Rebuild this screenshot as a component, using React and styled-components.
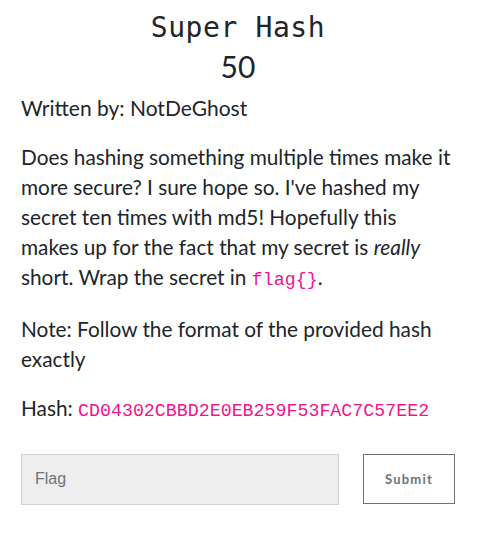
import styled, { createGlobalStyle } from "styled-components";

const GlobalStyle = createGlobalStyle`
    body {
        margin: 0;
        background: #fff;
        color: #212529;
        font-family: Lato, "Open Sans", sans-serif;
    }
`

function App() {
    return (
        <Wrapper>
            <GlobalStyle />
            <Title>Super Hash</Title>
            <Points>50</Points>
            <Author>Written by: NotDeGhost</Author>
            <Description>
                <p>
                    Does hashing something multiple times make it more secure? I sure hope so.
                    I've hashed my secret ten times with md5! Hopefully this makes up for the
                    fact that my secret is <em>really</em> short. Wrap the secret in <Code>flag{'{}'}</Code>.
                </p>
                <p>Note: Follow the format of the provided hash exactly</p>
                <p>Hash: <Code>CD04302CBBD2E0EB259F53FAC7C57EE2</Code></p>
            </Description>
            <SubmitRow>
                <FlagInput type="text" placeholder="Flag" />
                <SubmitButton>Submit</SubmitButton>
            </SubmitRow>
        </Wrapper>
    )
}

export default App

const Wrapper = styled.div`
    width: 434px;
    padding: 11px 27px 20px 21px;
`

const Title = styled.h3`
    margin: 0;
    text-align: center;
    font-family: "DejaVu Sans Mono", monospace;
    font-weight: 400;
    font-size: 28px;
    letter-spacing: 0.6px;
    line-height: 1.2;
    color: #212529;
`

const Points = styled.h4`
    margin: 3px 0 0;
    text-align: center;
    font-weight: 400;
    font-size: 30px;
    line-height: 1.2;
`

const Author = styled.div`
    margin-top: 9px;
    font-size: 21px;
    line-height: 30px;
`

const Description = styled.div`
    margin-top: 19px;
    font-size: 20.8px;
    line-height: 30px;
    p {
        margin: 0 0 19px;
    }
`

const Code = styled.code`
    font-family: "Liberation Mono", monospace;
    font-size: 18.3px;
    color: #f0148c;
`

const SubmitRow = styled.div`
    display: flex;
    gap: 24px;
    margin-top: 28px;
`

const FlagInput = styled.input`
    width: 318px;
    height: 51px;
    box-sizing: border-box;
    padding: 0 13px;
    border: 1px solid #ced4da;
    background: #eeeeee;
    font-family: "Liberation Sans", Arial, sans-serif;
    font-size: 16px;
    color: #495057;
    outline: none;
    &::placeholder {
        color: #6c757d;
    }
`

const SubmitButton = styled.button`
    width: 92px;
    height: 50px;
    box-sizing: border-box;
    border: 1px solid #6c757d;
    background: #fff;
    color: #6c757d;
    font-family: Lato, sans-serif;
    font-weight: 700;
    font-size: 13px;
    letter-spacing: 1.2px;
    cursor: pointer;
`
